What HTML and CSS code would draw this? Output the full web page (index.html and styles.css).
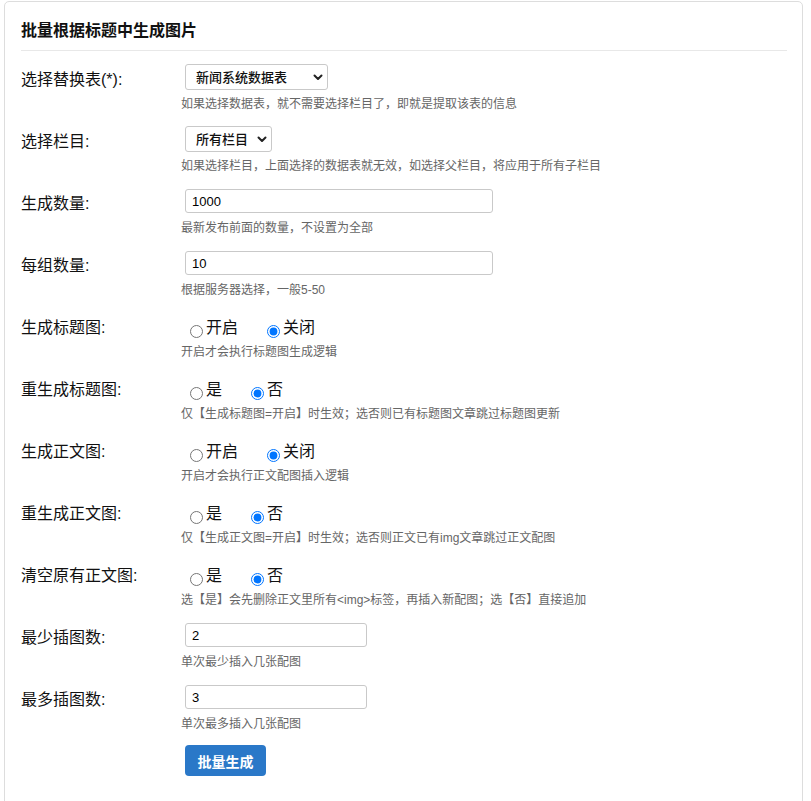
FILE: index.html
```html
<!DOCTYPE html>
<html lang="zh-CN">
<head>
<meta charset="utf-8">
<title>批量根据标题中生成图片</title>
<link rel="stylesheet" href="styles.css">
</head>
<body>
<div class="card">
  <h2 class="card-title">批量根据标题中生成图片</h2>
  <form class="form">
    <div class="row">
      <label class="label">选择替换表(*):</label>
      <div class="field">
        <div class="ctrl">
          <span class="select-wrap select-wide">
            <select class="select"><option>新闻系统数据表</option></select>
            <svg class="chev" width="10" height="7" viewBox="0 0 10 7"><path d="M1.5 1.5 L5 5 L8.5 1.5" fill="none" stroke="#222" stroke-width="2" stroke-linecap="round" stroke-linejoin="round"/></svg>
          </span>
        </div>
        <div class="help">如果选择数据表，就不需要选择栏目了，即就是提取该表的信息</div>
      </div>
    </div>
    <div class="row">
      <label class="label">选择栏目:</label>
      <div class="field">
        <div class="ctrl">
          <span class="select-wrap select-narrow">
            <select class="select"><option>所有栏目</option></select>
            <svg class="chev" width="10" height="7" viewBox="0 0 10 7"><path d="M1.5 1.5 L5 5 L8.5 1.5" fill="none" stroke="#222" stroke-width="2" stroke-linecap="round" stroke-linejoin="round"/></svg>
          </span>
        </div>
        <div class="help">如果选择栏目，上面选择的数据表就无效，如选择父栏目，将应用于所有子栏目</div>
      </div>
    </div>
    <div class="row">
      <label class="label">生成数量:</label>
      <div class="field">
        <div class="ctrl"><input class="input input-long" type="text" value="1000"></div>
        <div class="help">最新发布前面的数量，不设置为全部</div>
      </div>
    </div>
    <div class="row">
      <label class="label">每组数量:</label>
      <div class="field">
        <div class="ctrl"><input class="input input-long" type="text" value="10"></div>
        <div class="help">根据服务器选择，一般5-50</div>
      </div>
    </div>
    <div class="row">
      <label class="label">生成标题图:</label>
      <div class="field">
        <div class="radios">
          <label class="opt"><input class="radio" type="radio" name="r1"><span>开启</span></label>
          <label class="opt"><input class="radio" type="radio" name="r1" checked><span>关闭</span></label>
        </div>
        <div class="help">开启才会执行标题图生成逻辑</div>
      </div>
    </div>
    <div class="row">
      <label class="label">重生成标题图:</label>
      <div class="field">
        <div class="radios">
          <label class="opt"><input class="radio" type="radio" name="r2"><span>是</span></label>
          <label class="opt"><input class="radio" type="radio" name="r2" checked><span>否</span></label>
        </div>
        <div class="help">仅【生成标题图=开启】时生效；选否则已有标题图文章跳过标题图更新</div>
      </div>
    </div>
    <div class="row">
      <label class="label">生成正文图:</label>
      <div class="field">
        <div class="radios">
          <label class="opt"><input class="radio" type="radio" name="r3"><span>开启</span></label>
          <label class="opt"><input class="radio" type="radio" name="r3" checked><span>关闭</span></label>
        </div>
        <div class="help">开启才会执行正文配图插入逻辑</div>
      </div>
    </div>
    <div class="row">
      <label class="label">重生成正文图:</label>
      <div class="field">
        <div class="radios">
          <label class="opt"><input class="radio" type="radio" name="r4"><span>是</span></label>
          <label class="opt"><input class="radio" type="radio" name="r4" checked><span>否</span></label>
        </div>
        <div class="help">仅【生成正文图=开启】时生效；选否则正文已有img文章跳过正文配图</div>
      </div>
    </div>
    <div class="row">
      <label class="label">清空原有正文图:</label>
      <div class="field">
        <div class="radios">
          <label class="opt"><input class="radio" type="radio" name="r5"><span>是</span></label>
          <label class="opt"><input class="radio" type="radio" name="r5" checked><span>否</span></label>
        </div>
        <div class="help">选【是】会先删除正文里所有&lt;img&gt;标签，再插入新配图；选【否】直接追加</div>
      </div>
    </div>
    <div class="row">
      <label class="label">最少插图数:</label>
      <div class="field">
        <div class="ctrl"><input class="input input-short" type="text" value="2"></div>
        <div class="help">单次最少插入几张配图</div>
      </div>
    </div>
    <div class="row">
      <label class="label">最多插图数:</label>
      <div class="field">
        <div class="ctrl"><input class="input input-short" type="text" value="3"></div>
        <div class="help">单次最多插入几张配图</div>
      </div>
    </div>
    <div class="row">
      <div class="label"></div>
      <div class="field">
        <div class="ctrl-btn"><button class="btn" type="button">批量生成</button></div>
      </div>
    </div>
  </form>
</div>
</body>
</html>
```

FILE: styles.css
```css
* { box-sizing: border-box; }

html, body {
  margin: 0;
  padding: 0;
  background: #ffffff;
}

body {
  font-family: "Liberation Sans", "Noto Sans CJK SC", sans-serif;
  color: #111;
}

.card {
  margin: 1px 8px 0 4px;
  border: 1px solid #dddddd;
  border-radius: 5px;
  padding: 17px 15px 40px 16px;
  background: #fff;
}

.card-title {
  margin: 0;
  font-size: 16px;
  font-weight: bold;
  line-height: 24px;
  padding-bottom: 7px;
  border-bottom: 1px solid #e8e8e8;
  color: #111;
}

.form {
  margin-top: 12px;
}

.row {
  display: flex;
  margin-bottom: 11px;
}

.label {
  width: 160px;
  flex-shrink: 0;
  font-size: 16px;
  line-height: 20px;
  padding-top: 7px;
  color: #111;
}

.field {
  flex: 1;
  min-width: 0;
}

.ctrl {
  height: 28px;
  display: flex;
  align-items: center;
  padding-left: 4px;
}

.ctrl-btn {
  padding-left: 4px;
}

.help {
  margin-top: 3px;
  font-size: 12px;
  line-height: 20px;
  color: #666;
  white-space: nowrap;
}

.select-wrap {
  position: relative;
  display: inline-block;
  height: 26px;
}

.select-wide { width: 143px; }
.select-narrow { width: 87px; }

.select {
  -webkit-appearance: none;
  appearance: none;
  width: 100%;
  height: 26px;
  border: 1px solid #c9c9c9;
  border-radius: 3px;
  background: #fff;
  padding: 0 20px 0 10px;
  font-family: "Liberation Sans", "Noto Sans CJK SC", sans-serif;
  font-size: 13px;
  font-weight: 500;
  color: #111;
  outline: none;
}

.chev {
  position: absolute;
  right: 5px;
  top: 10px;
  pointer-events: none;
}

.input {
  height: 24px;
  border: 1px solid #c9c9c9;
  border-radius: 3px;
  padding: 0 6px;
  font-family: "Liberation Sans", "Noto Sans CJK SC", sans-serif;
  font-size: 13px;
  color: #000;
  background: #fff;
  outline: none;
}

.input-long { width: 308px; }
.input-short { width: 182px; }

.radios {
  height: 28px;
  padding-top: 7px;
  padding-left: 4px;
  display: flex;
}

.opt {
  display: flex;
  align-items: center;
  height: 20px;
  margin-right: 24px;
  font-size: 16px;
  line-height: 20px;
  color: #111;
}

.radio {
  width: 13px;
  height: 13px;
  margin: 6px 3px 0 5px;
}

.btn {
  height: 31px;
  width: 81px;
  padding: 0;
  border: none;
  border-radius: 4px;
  background: #2a78c8;
  color: #fff;
  font-family: "Liberation Sans", "Noto Sans CJK SC", sans-serif;
  font-size: 14px;
  font-weight: bold;
  cursor: pointer;
}
```
